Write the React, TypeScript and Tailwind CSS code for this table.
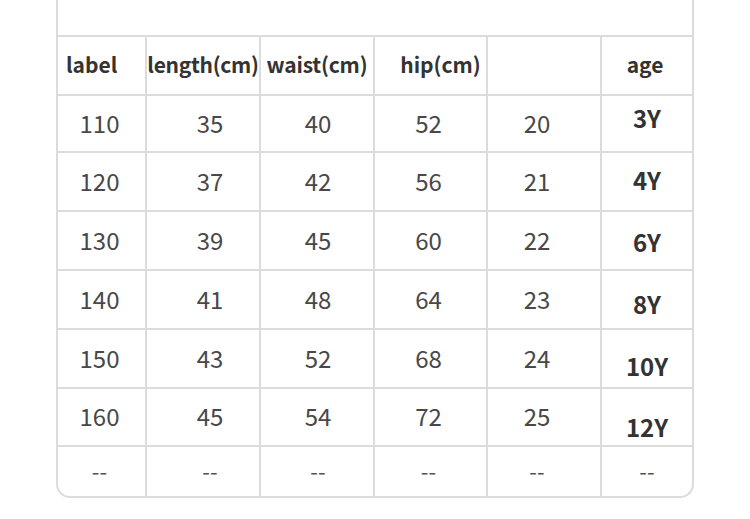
import React from "react";

const widths = ["w-[89px]", "w-[114px]", "w-[114px]", "w-[113px]", "w-[114px]", "w-[90px]"];
const pads = ["pr-[4px]", "pl-[14px]", "pl-[2px]", "pr-[4px]", "pr-[14px]", "pl-0"];

const rows = [
  { h: "h-[57px]", v: ["110", "35", "40", "52", "20"], age: "3Y", off: "-translate-y-[6px]" },
  { h: "h-[59px]", v: ["120", "37", "42", "56", "21"], age: "4Y", off: "-translate-y-[2px]" },
  { h: "h-[59px]", v: ["130", "39", "45", "60", "22"], age: "6Y", off: "translate-y-[1px]" },
  { h: "h-[59px]", v: ["140", "41", "48", "64", "23"], age: "8Y", off: "translate-y-[4px]" },
  { h: "h-[59px]", v: ["150", "43", "52", "68", "24"], age: "10Y", off: "translate-y-[7px]" },
  { h: "h-[58px]", v: ["160", "45", "54", "72", "25"], age: "12Y", off: "translate-y-[10px]" },
];

const cellBase = "flex items-center justify-center border-[#dcdcdc]";

export default function App() {
  return (
    <div
      className="w-[750px] h-[519px] bg-white overflow-hidden"
      style={{ fontFamily: '"Noto Sans CJK SC", "Noto Sans", sans-serif' }}
    >
      <div className="ml-[56px] w-[638px] border-x-2 border-b-2 border-[#dcdcdc] rounded-b-[14px] overflow-hidden">
        <div className="h-[37px] border-b-2 border-[#dcdcdc]" />
        {/* header */}
        <div className="flex h-[59px] border-b-2 border-[#dcdcdc] text-[21px] font-bold text-[#333] leading-none">
          <div className={`${widths[0]} h-full flex items-center pl-[8px] pb-[3px] border-r-2 border-[#dcdcdc]`}>label</div>
          <div className={`${widths[1]} h-full ${cellBase} pb-[3px] border-r-2 tracking-[-0.3px] whitespace-nowrap`}>length(cm)</div>
          <div className={`${widths[2]} h-full ${cellBase} pb-[3px] border-r-2 tracking-[-0.2px] whitespace-nowrap`}>waist(cm)</div>
          <div className={`${widths[3]} h-full ${cellBase} pb-[3px] border-r-2 pl-[20px]`}>hip(cm)</div>
          <div className={`${widths[4]} h-full ${cellBase} border-r-2`}></div>
          <div className={`${widths[5]} h-full ${cellBase} pb-[3px] pr-[4px]`}>age</div>
        </div>
        {rows.map((r) => (
          <div key={r.age} className={`flex ${r.h} border-b-2 border-[#dcdcdc] text-[24px] text-[#484848] leading-none`}>
            {r.v.map((val, i) => (
              <div key={i} className={`${widths[i]} h-full ${cellBase} pb-[2px] border-r-2 ${pads[i]}`}>
                {val}
              </div>
            ))}
            <div className={`${widths[5]} h-full ${cellBase}`}>
              <span className={`font-bold text-[#333] ${r.off}`}>{r.age}</span>
            </div>
          </div>
        ))}
        <div className="flex h-[49px] text-[22px] text-[#555] leading-none">
          {widths.map((w, i) => (
            <div key={i} className={`${w} h-full ${cellBase} pb-[4px] ${i < 5 ? "border-r-2" : ""} ${pads[i]}`}>
              --
            </div>
          ))}
        </div>
      </div>
    </div>
  );
}
